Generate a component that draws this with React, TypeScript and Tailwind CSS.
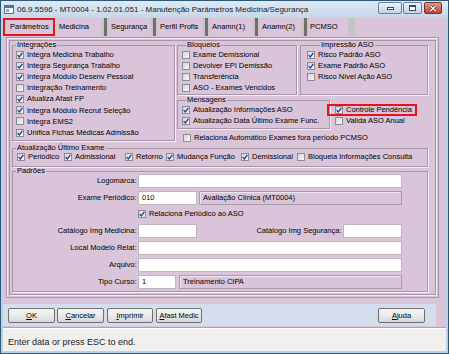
import React from "react";

function Check({ checked }: { checked?: boolean }) {
  return (
    <span className="flex-none w-[8px] h-[8px] border border-[#8c8d8e] bg-linear-to-br from-[#d6d6d6] to-[#f7f7f7] flex items-center justify-center">
      {checked && (
        <svg width="6" height="6" viewBox="0 0 6 6">
          <path d="M0.6 3.1 L2.3 4.9 L5.4 0.8" fill="none" stroke="#1f3f9a" strokeWidth="1.3" />
        </svg>
      )}
    </span>
  );
}

function CB({ label, checked, className = "" }: { label: string; checked?: boolean; className?: string }) {
  return (
    <div className={`flex items-center gap-[3px] ${className}`}>
      <Check checked={checked} />
      <span className="whitespace-nowrap">{label}</span>
    </div>
  );
}

function Legend({ children, className = "ml-[3px]" }: { children: React.ReactNode; className?: string }) {
  return <legend className={`${className} px-[1px] leading-[8px] whitespace-nowrap`}>{children}</legend>;
}

const fs = "border border-[#a696a6] shadow-[1px_1px_0_#f6eef6] min-w-0";

function Btn({ children, className = "" }: { children: React.ReactNode; className?: string }) {
  return (
    <button className={`h-[15px] border border-[#707070] rounded-[2px] bg-linear-to-b from-[#f5f5f5] via-[#ebebeb] to-[#d6d6d6] flex items-center justify-center text-[7.5px] leading-none ${className}`}>
      {children}
    </button>
  );
}

const input = "h-[14px] bg-white border border-[#bdb7bd] flex items-center pl-[3px]";
const ro = "h-[14px] border border-[#a99ba9] shadow-[inset_1px_1px_0_#efe5ef] flex items-center pl-[3px]";

export default function App() {
  return (
    <div className="w-[449px] h-[354px] bg-[#bcd0e6] border border-[#2b5a78] flex flex-col font-['Liberation_Sans',Arial,sans-serif] text-[7.5px] leading-none text-black overflow-hidden">
      {/* title bar */}
      <div className="h-[17px] flex-none flex items-center bg-linear-to-b from-[#dfe9f5] to-[#c6d6ea] pl-[3px] pr-[6px]">
        <svg width="10" height="9" viewBox="0 0 10 9" className="flex-none">
          <rect x="0.5" y="0.5" width="9" height="8" fill="#f4f4f4" stroke="#5f6f80" />
          <rect x="1" y="1" width="8" height="2" fill="#4a78b0" />
          <rect x="2" y="4" width="3" height="3" fill="#9aa8b8" />
        </svg>
        <span className="ml-[3px] text-[8px] text-[#1a1a1a] whitespace-nowrap">
          06.9.5596 - MT0004 - 1.02.01.051 - Manutenção Parâmetros Medicina/Segurança
        </span>
        <div className="ml-auto self-start mt-[1px] flex items-start">
          <div className="w-[24px] h-[12px] border border-[#6c809c] rounded-[2px] bg-linear-to-b from-[#eef3fa] to-[#c2d2e6] flex items-end justify-center pb-[3px]">
            <div className="w-[7px] h-[3px] bg-white border border-[#3a4a60]" />
          </div>
          <div className="ml-[1px] w-[19px] h-[12px] border border-[#6c809c] rounded-[2px] bg-linear-to-b from-[#eef3fa] to-[#c2d2e6] flex items-center justify-center">
            <div className="w-[7px] h-[6px] border border-[#3a4a60] border-t-2 bg-white" />
          </div>
          <div className="ml-[2px] w-[18px] h-[12px] border border-[#6a3a34] rounded-[2px] bg-linear-to-b from-[#e3968a] to-[#c5432f] flex items-center justify-center">
            <svg width="8" height="7" viewBox="0 0 8 7">
              <path d="M1 0.8 L7 6.2 M7 0.8 L1 6.2" stroke="#3a1a16" strokeWidth="2.4" />
              <path d="M1 0.8 L7 6.2 M7 0.8 L1 6.2" stroke="#ffffff" strokeWidth="1.4" />
            </svg>
          </div>
        </div>
      </div>

      {/* client area */}
      <div className="flex-1 mx-[2px] mb-[2px] bg-[#d9c4d9] flex flex-col">
        {/* tabs */}
        <div className="h-[19px] flex-none flex items-start">
          <div className="w-[52px] h-[18px] border-2 border-[#e3151d] flex">
            <div className="w-[2px] bg-[#c9c9c9]" />
            <div className="flex-1 flex items-center pl-[3px] whitespace-nowrap">Parâmetros</div>
          </div>
          <Tab label="Medicina" w="w-[52px]" />
          <Tab label="Segurança" w="w-[49px]" />
          <Tab label="Perfil Profis" w="w-[52px]" />
          <Tab label="Anamn(1)" w="w-[50px]" />
          <Tab label="Anamn(2)" w="w-[49px]" />
          <div className="w-[48px] h-[18px] flex">
            <div className="w-[2px] bg-[#c9c9c9]" />
            <div className="flex-1 flex items-center pl-[1px] whitespace-nowrap">PCMSO</div>
            <div className="w-[7px] bg-[#c4c4c4]" />
          </div>
        </div>

        {/* tab page */}
        <div className="ml-[3px] w-[433px] h-[261px] flex-none border border-[#a795a7] shadow-[inset_1px_1px_0_#f3eaf3] pt-[2px] pl-[2px]">
          <div className="w-[427px] h-[255px] border border-[#a795a7] shadow-[1px_1px_0_#f3eaf3] pl-[2px] flex flex-col">
            {/* row 1 */}
            <div className="h-[103px] flex-none flex items-start">
              <fieldset className={`${fs} w-[163px] h-[100px]`}>
                <Legend>Integrações</Legend>
                <div className="pl-[3px] flex flex-col">
                  <CB className="h-[11.15px]" checked label="Integra Medicina Trabalho" />
                  <CB className="h-[11.15px]" checked label="Integra Segurança Trabalho" />
                  <CB className="h-[11.15px]" checked label="Integra Módulo Desenv Pessoal" />
                  <CB className="h-[11.15px]" label="Integração Treinamento" />
                  <CB className="h-[11.15px]" checked label="Atualiza Afast FP" />
                  <CB className="h-[11.15px]" checked label="Integra Módulo Recrut Seleção" />
                  <CB className="h-[11.15px]" label="Integra EMS2" />
                  <CB className="h-[11.15px]" checked label="Unifica Fichas Médicas Admissão" />
                </div>
              </fieldset>
              <div className="ml-[2px] w-[251px] flex flex-col">
                <div className="flex items-start">
                  <fieldset className={`${fs} w-[120px] h-[54px]`}>
                    <Legend className="ml-[8px]">Bloqueios</Legend>
                    <div className="pl-[4px] pt-[0.5px] flex flex-col">
                      <CB className="h-[11px]" label="Exame Demissional" />
                      <CB className="h-[11px]" label="Devolver EPI Demissão" />
                      <CB className="h-[11px]" label="Transferência" />
                      <CB className="h-[11px]" label="ASO - Exames Vencidos" />
                    </div>
                  </fieldset>
                  <fieldset className={`${fs} ml-[3px] w-[128px] h-[54px]`}>
                    <Legend className="ml-[19px]">Impressão ASO</Legend>
                    <div className="pl-[6px] pt-[0.5px] flex flex-col">
                      <CB className="h-[11px]" checked label="Risco Padrão ASO" />
                      <CB className="h-[11px]" checked label="Exame Padrão ASO" />
                      <CB className="h-[11px]" label="Risco Nível Ação ASO" />
                    </div>
                  </fieldset>
                </div>
                <div className="mt-[1px] flex items-start">
                  <fieldset className={`${fs} w-[153px] h-[33px]`}>
                    <Legend className="ml-[8px]">Mensagens</Legend>
                    <div className="pl-[4px] pt-[0.5px] flex flex-col">
                      <CB className="h-[11px]" checked label="Atualização Informações ASO" />
                      <CB className="h-[11px]" checked label="Atualização Data Último Exame Func." />
                    </div>
                  </fieldset>
                  <div className="ml-[-3px] pt-[8px] flex flex-col">
                    <div className="w-[90px] h-[12px] border-2 border-[#e3151d] pl-[6px] flex items-center">
                      <CB checked label="Controle Pendência" />
                    </div>
                    <CB className="h-[11px] -mt-[0.5px] pl-[8px]" label="Valida ASO Anual" />
                  </div>
                </div>
                <CB className="mt-[3.5px] h-[11px] pl-[6px]" label="Relaciona Automático Exames fora período PCMSO" />
              </div>
            </div>

            {/* Atualização último exame */}
            <fieldset className={`${fs} w-[416px] h-[23px] flex-none`}>
              <Legend>Atualização Último Exame</Legend>
              <div className="h-[10px] pl-[4px] flex items-center">
                <CB className="w-[47px]" checked label="Periódico" />
                <CB className="w-[61px]" checked label="Admissional" />
                <CB className="w-[41px]" checked label="Retorno" />
                <CB className="w-[75px]" checked label="Mudança Função" />
                <CB className="w-[56px]" checked label="Demissional" />
                <CB label="Bloqueia Informações Consulta" />
              </div>
            </fieldset>

            {/* Padrões */}
            <fieldset className={`${fs} w-[416px] h-[125px] flex-none`}>
              <Legend>Padrões</Legend>
              <div className="-mt-[1px] flex flex-col">
                <div className="flex items-center">
                  <span className="w-[125px] text-right pr-[1.5px]">Logomarca:</span>
                  <div className={`${input} w-[264px]`} />
                </div>
                <div className="mt-[3px] flex items-center">
                  <span className="w-[125px] text-right pr-[1.5px]">Exame Periódico:</span>
                  <div className={`${input} w-[59px]`}>010</div>
                  <div className={`${ro} ml-[2px] w-[203px]`}>Avaliação Clínica (MT0004)</div>
                </div>
                <div className="mt-[4px] h-[10px] flex items-center pl-[125px]">
                  <CB checked label="Relaciona Periódico ao ASO" />
                </div>
                <div className="mt-[5px] flex items-center">
                  <span className="w-[125px] text-right pr-[1.5px]">Catálogo Img Medicina:</span>
                  <div className={`${input} w-[59px]`} />
                  <span className="w-[146px] text-right pr-[1.5px]">Catálogo Img Segurança:</span>
                  <div className={`${input} w-[59px]`} />
                </div>
                <div className="mt-[3px] flex items-center">
                  <span className="w-[125px] text-right pr-[1.5px]">Local Modelo Relat:</span>
                  <div className={`${input} w-[264px]`} />
                </div>
                <div className="mt-[3px] flex items-center">
                  <span className="w-[125px] text-right pr-[1.5px]">Arquivo:</span>
                  <div className={`${input} w-[264px]`} />
                </div>
                <div className="mt-[3px] flex items-center">
                  <span className="w-[125px] text-right pr-[1.5px]">Tipo Curso:</span>
                  <div className={`${input} w-[38px]`}>1</div>
                  <div className={`${ro} ml-[3px] w-[223px]`}>Treinamento CIPA</div>
                </div>
              </div>
            </fieldset>
          </div>
        </div>

        {/* button bar */}
        <div className="mt-[6px] w-[433px] h-[22px] flex-none bg-[#d3ddee] flex items-start pt-[4px] pl-[5px] pr-[11px]">
          <Btn className="w-[47px]"><span><u>O</u>K</span></Btn>
          <Btn className="ml-[2px] w-[47px]"><span><u>C</u>ancelar</span></Btn>
          <Btn className="ml-[3px] w-[46px]"><span><u>I</u>mprimir</span></Btn>
          <Btn className="ml-[3px] w-[46px]"><span><u>A</u>fast Medic</span></Btn>
          <Btn className="ml-auto w-[47px]"><span><u>A</u>juda</span></Btn>
        </div>

        {/* status bar */}
        <div className="mt-[1px] flex-1 bg-[#f0efee] border-t border-[#a7a7a7] shadow-[inset_0_1px_0_#ffffff] flex items-end pb-[4px] pl-[5px]">
          <span className="text-[9px] text-[#1c1c1c] whitespace-nowrap">Enter data or press ESC to end.</span>
        </div>
      </div>
    </div>
  );
}

function Tab({ label, w }: { label: string; w: string }) {
  return (
    <div className={`${w} h-[18px] flex`}>
      <div className="w-[2px] bg-[#c9c9c9]" />
      <div className="flex-1 flex items-center pl-[2px] whitespace-nowrap">{label}</div>
      <div className="w-[2px] bg-[#c4c4c4]" />
      <div className="w-[3px] bg-[#6e6e6e]" />
    </div>
  );
}
